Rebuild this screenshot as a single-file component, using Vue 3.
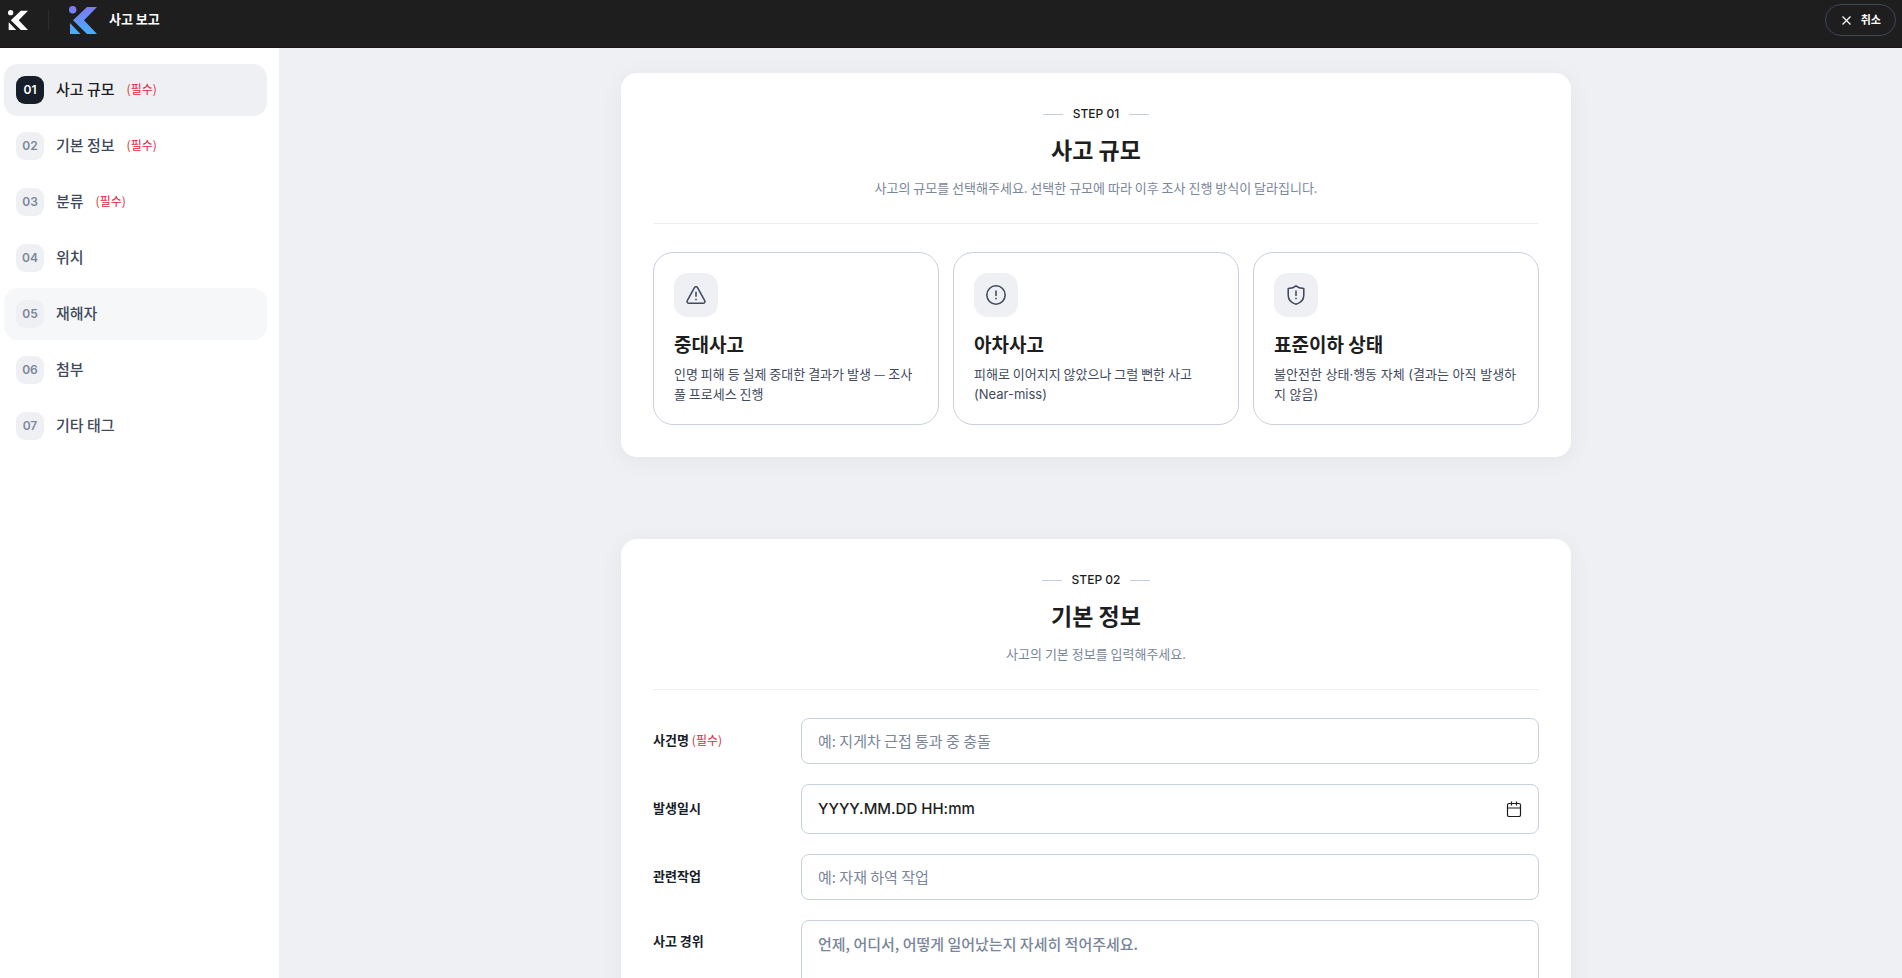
<script setup>
import { ref } from 'vue'

const steps = [
  { no: '01', label: '사고 규모', required: true, state: 'active' },
  { no: '02', label: '기본 정보', required: true },
  { no: '03', label: '분류', required: true },
  { no: '04', label: '위치' },
  { no: '05', label: '재해자', state: 'hovered' },
  { no: '06', label: '첨부' },
  { no: '07', label: '기타 태그' },
]

const title = ref('')
const occurredAt = ref('')
const work = ref('')
const detail = ref('')
</script>

<template>
  <div class="app">
    <header class="topbar">
      <a class="home" href="#" aria-label="홈">
        <svg width="20" height="20" viewBox="0 0 28 28" fill="#fff">
          <circle cx="3.7" cy="3.7" r="3.7" />
          <path d="M18 1h10L15 14.3 28 28H18L4 14.3z" />
          <path d="M1 17l10.5 11H1z" />
        </svg>
      </a>
      <span class="bar"></span>
      <svg class="brand" width="28" height="28" viewBox="0 0 28 28" fill="url(#brandFill)" aria-hidden="true">
        <defs>
          <linearGradient id="brandFill" gradientUnits="userSpaceOnUse" x1="0" y1="0" x2="0" y2="28">
            <stop offset="0" stop-color="#8475f7" />
            <stop offset="1" stop-color="#44b0fc" />
          </linearGradient>
        </defs>
        <circle cx="3.7" cy="3.7" r="3.7" />
        <path d="M18 1h10L15 14.3 28 28H18L4 14.3z" />
        <path d="M1 17l10.5 11H1z" />
      </svg>
      <h1 class="page-title">사고 보고</h1>
      <button class="cancel" type="button">
        <svg width="9" height="9" viewBox="0 0 9 9" fill="none" stroke="#fff" stroke-width="1.2" aria-hidden="true">
          <path d="M.5.5l8 8M8.5.5l-8 8" />
        </svg>
        <span>취소</span>
      </button>
    </header>

    <div class="body">
      <nav class="sidebar">
        <a v-for="s in steps" :key="s.no" href="#" class="step" :class="s.state">
          <span class="step-no">{{ s.no }}</span>
          <span class="step-label">{{ s.label }}</span>
          <span v-if="s.required" class="required">(필수)</span>
        </a>
      </nav>

      <main class="content">
        <section class="card">
          <div class="card-head">
            <p class="eyebrow">STEP 01</p>
            <h2>사고 규모</h2>
            <p class="lead">사고의 규모를 선택해주세요. 선택한 규모에 따라 이후 조사 진행 방식이 달라집니다.</p>
          </div>
          <div class="choices">
            <button class="choice" type="button">
              <span class="tile">
                <svg width="22" height="22" viewBox="0 0 24 24" class="line-icon" aria-hidden="true">
                  <path d="M13.7 3.9l7.8 14.2a1.95 1.95 0 0 1-1.7 2.9H4.2a1.95 1.95 0 0 1-1.7-2.9l7.8-14.2a1.95 1.95 0 0 1 3.4 0z" />
                  <path d="M12 8.5v5.5M12 16v1.6" />
                </svg>
              </span>
              <strong>중대사고</strong>
              <span class="choice-text">인명 피해 등 실제 중대한 결과가 발생 — 조사 풀 프로세스 진행</span>
            </button>
            <button class="choice" type="button">
              <span class="tile">
                <svg width="22" height="22" viewBox="0 0 24 24" class="line-icon" aria-hidden="true">
                  <circle cx="12" cy="12" r="10" />
                  <path d="M12 7v6M12 15v1.6" />
                </svg>
              </span>
              <strong>아차사고</strong>
              <span class="choice-text">피해로 이어지지 않았으나 그럴 뻔한 사고 <span class="latin">(Near-miss)</span></span>
            </button>
            <button class="choice" type="button">
              <span class="tile">
                <svg width="22" height="22" viewBox="0 0 24 24" class="line-icon" aria-hidden="true">
                  <path d="M12 2c2 1.7 5 2.6 8.5 3v7c0 5.5-3.5 8.7-8.5 10-5-1.3-8.5-4.500-8.5-10V5c3.5-.4 6.500-1.300 8.500-3z" />
                  <path d="M12 7v6M12 15v1.6" />
                </svg>
              </span>
              <strong>표준이하 상태</strong>
              <span class="choice-text latin">불안전한 상태·행동 자체 (결과는 아직 발생하지 않음)</span>
            </button>
          </div>
        </section>

        <section class="card">
          <div class="card-head">
            <p class="eyebrow">STEP 02</p>
            <h2>기본 정보</h2>
            <p class="lead">사고의 기본 정보를 입력해주세요.</p>
          </div>
          <form class="form">
            <div class="row">
              <label for="title">사건명 <span class="required">(필수)</span></label>
              <input id="title" v-model="title" class="field" type="text" placeholder="예: 지게차 근접 통과 중 충돌" />
            </div>
            <div class="row">
              <label for="occurred">발생일시</label>
              <div class="field date">
                <input id="occurred" v-model="occurredAt" type="text" placeholder="YYYY.MM.DD HH:mm" />
                <button type="button" aria-label="날짜 선택">
                  <svg width="16" height="16" viewBox="0 0 16 16" fill="none" stroke="#1e1e1e" stroke-width="1.2" aria-hidden="true">
                    <rect x="1.5" y="2.5" width="13" height="13" rx="1.5" />
                    <path d="M1.5 7h13M5.5.5v4M10.5.5v4" />
                  </svg>
                </button>
              </div>
            </div>
            <div class="row">
              <label for="work">관련작업</label>
              <input id="work" v-model="work" class="field" type="text" placeholder="예: 자재 하역 작업" />
            </div>
            <div class="row top">
              <label for="detail">사고 경위</label>
              <textarea id="detail" v-model="detail" class="field" rows="5" placeholder="언제, 어디서, 어떻게 일어났는지 자세히 적어주세요."></textarea>
            </div>
          </form>
        </section>
      </main>
    </div>
  </div>
</template>

<style>
body {
  background: #eff0f4;
}
</style>

<style scoped>
.app {
  display: flex;
  flex-direction: column;
  height: 100vh;
  font-family: "Noto Sans CJK KR", Inter, sans-serif;
  font-size: 13px;
  color: #1e1e1e;
}
.app * {
  box-sizing: border-box;
}
h1, h2, p {
  margin: 0;
}
button, input, textarea {
  font: inherit;
}
button {
  cursor: pointer;
}
a {
  text-decoration: none;
}
svg {
  display: block;
  flex: none;
}
.latin, .eyebrow, .step-no, .date {
  font-family: Inter, "Noto Sans CJK KR", sans-serif;
}

.topbar {
  display: flex;
  align-items: center;
  flex: none;
  height: 48px;
  padding: 0 6px 7px 8px;
  background: #1e1e1e;
  border-bottom: 1px solid #1b1119;
}
.bar {
  width: 1px;
  height: 20px;
  margin: 0 20px;
  background: #2a2b2d;
}
.page-title {
  margin-left: 12px;
  padding-bottom: 2px;
  font-size: 13px;
  line-height: 20px;
  font-weight: 700;
  color: #fff;
}
.cancel {
  display: flex;
  align-items: center;
  gap: 10px;
  height: 32px;
  margin-left: auto;
  padding: 0 14px 0 16px;
  border: 1px solid #3c4757;
  border-radius: 16px;
  background: transparent;
  color: #fff;
  font-size: 11px;
  line-height: 16px;
  font-weight: 700;
}
.cancel span {
  padding-bottom: 2px;
}

.body {
  display: flex;
  flex: 1;
  min-height: 0;
}
.sidebar {
  display: flex;
  flex-direction: column;
  flex: none;
  gap: 4px;
  width: 279px;
  padding: 16px 12px 16px 4px;
  background: #fff;
}
.step {
  display: flex;
  align-items: center;
  gap: 12px;
  height: 52px;
  padding: 0 12px;
  border-radius: 14px;
  color: #3f4a5c;
}
.step.active {
  background: #eff0f4;
  color: #1e1e1e;
}
.step.hovered {
  background: #f6f7f9;
}
.step-no {
  width: 28px;
  border-radius: 9px;
  background: #eff0f4;
  color: #7c879a;
  font-size: 12px;
  line-height: 28px;
  font-weight: 600;
  text-align: center;
}
.active .step-no {
  background: #171e29;
  color: #fff;
}
.step-label {
  padding-bottom: 2px;
  font-size: 15px;
  line-height: 24px;
  font-weight: 500;
}
.required {
  padding-bottom: 2px;
  font-size: 12px;
  line-height: 20px;
  font-weight: 400;
  color: #e0263f;
}

.content {
  display: flex;
  flex: 1;
  flex-direction: column;
  align-items: center;
  gap: 82px;
  padding: 25px 0 80px 11px;
  overflow-y: auto;
  scrollbar-width: none;
}
.card {
  flex: none;
  width: 100%;
  max-width: 950px;
  padding: 32px;
  border-radius: 16px;
  background: #fff;
  box-shadow: 0 4px 24px rgba(30, 35, 50, 0.05);
}
.card-head {
  display: flex;
  flex-direction: column;
  align-items: center;
  gap: 8px;
  margin-bottom: 28px;
  padding-bottom: 25px;
  border-bottom: 1px solid #eceef1;
  text-align: center;
}
.eyebrow {
  display: flex;
  align-items: center;
  gap: 10px;
  font-size: 12px;
  line-height: 18px;
  font-weight: 500;
}
.eyebrow::before, .eyebrow::after {
  content: "";
  width: 20px;
  height: 1px;
  background: #c6cedd;
}
h2 {
  font-size: 23px;
  line-height: 36px;
  font-weight: 700;
}
.lead {
  padding-top: 3px;
  line-height: 20px;
  color: #7a869a;
}

.choices {
  display: grid;
  grid-template-columns: repeat(3, 1fr);
  gap: 14px;
}
.choice {
  display: flex;
  flex-direction: column;
  align-items: flex-start;
  padding: 20px;
  border: 1px solid #c8cfde;
  border-radius: 20px;
  background: #fff;
  color: #1e1e1e;
  text-align: left;
}
.tile {
  display: grid;
  place-items: center;
  width: 44px;
  height: 44px;
  margin-bottom: 13px;
  border-radius: 14px;
  background: #eff0f4;
}
.line-icon {
  fill: none;
  stroke: #3f4a5c;
  stroke-width: 1.7;
  stroke-linejoin: round;
}
.choice strong {
  font-size: 19px;
  line-height: 28px;
  font-weight: 700;
}
.choice-text {
  margin-top: 6px;
  line-height: 20px;
  color: #3f4a5c;
}

.form {
  display: flex;
  flex-direction: column;
  gap: 20px;
}
.row {
  display: grid;
  grid-template-columns: 148px 1fr;
  align-items: center;
}
.row label {
  padding-bottom: 2px;
  line-height: 20px;
  font-weight: 700;
  color: #171e29;
}
.row.top {
  align-items: start;
}
.row.top label {
  padding-top: 11px;
}
.field {
  width: 100%;
  height: 46px;
  padding: 0 16px 2px;
  border: 1px solid #c8cfde;
  border-radius: 8px;
  background: #fff;
  color: #1e1e1e;
  font-size: 15px;
  line-height: 22px;
}
.field::placeholder {
  color: #7a869a;
  opacity: 1;
}
textarea.field {
  display: block;
  height: 136px;
  padding: 12px 16px;
  font-weight: 500;
  resize: none;
}
.date {
  display: flex;
  align-items: center;
  height: 50px;
  padding: 0 16px;
  font-weight: 500;
}
.date input {
  flex: 1;
  min-width: 0;
  padding: 0;
  border: 0;
  outline: 0;
  background: none;
  color: #1e1e1e;
}
.date input::placeholder {
  color: #1e1e1e;
  opacity: 1;
}
.date button {
  padding: 0;
  border: 0;
  background: none;
}
</style>
